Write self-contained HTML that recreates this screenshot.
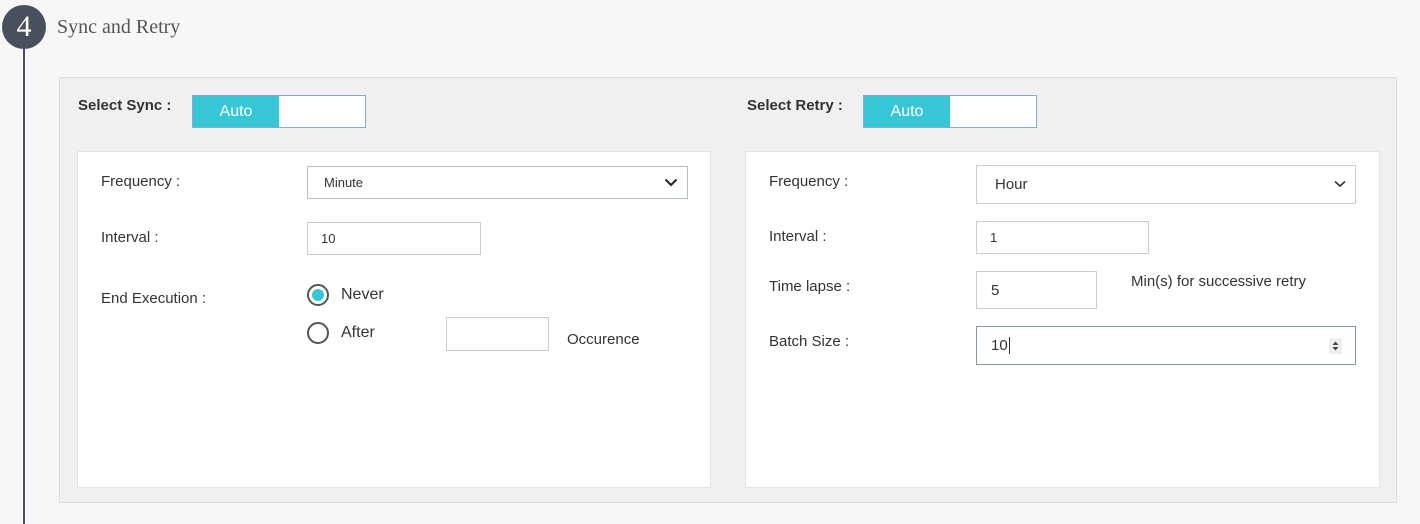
<!DOCTYPE html><html><head><style>
body{margin:0;width:1420px;height:524px;background:#f7f7f7;position:relative;overflow:hidden;font-family:"Liberation Sans",sans-serif;color:#333}
.a{position:absolute}
.lbl{font-size:15px;color:#333}
.in{position:absolute;background:#fff;border:1px solid #c5cdd9;box-sizing:border-box;font-size:14px;color:#333;display:flex;align-items:center}
.tg{position:absolute;height:33px;width:174px;border:1px solid #8aa9cc;box-sizing:border-box;background:#fff}
.tg div{width:86px;height:100%;background:#37c6d6;color:#fff;font-size:16px;display:flex;align-items:center;justify-content:center}
.chev{position:absolute;right:9px;top:50%;margin-top:-5px}
</style></head><body>
<div class="a" style="left:23px;top:40px;width:2px;height:484px;background:#4a4f5e"></div>
<div class="a" style="left:2px;top:5px;width:44px;height:44px;border-radius:50%;background:#4a4f5e;color:#fff;font-family:'Liberation Serif',serif;font-size:30px;text-align:center;line-height:44px">4</div>
<div class="a" style="left:57px;top:16px;font-family:'Liberation Serif',serif;font-size:20px;color:#555">Sync and Retry</div>
<div class="a" style="left:59px;top:77px;width:1338px;height:426px;background:#f0f0f0;border:1px solid #dcdcdc;box-sizing:border-box"></div>
<div class="a" style="left:78px;top:97px;font-size:15px;font-weight:bold;color:#333">Select Sync :</div>
<div class="tg" style="left:192px;top:95px"><div>Auto</div></div>
<div class="a" style="left:747px;top:97px;font-size:15px;font-weight:bold;color:#333">Select Retry :</div>
<div class="tg" style="left:863px;top:95px"><div>Auto</div></div>
<div class="a" style="left:77px;top:151px;width:634px;height:337px;background:#fff;border:1px solid #e4e4e4;box-sizing:border-box"></div>
<div class="a" style="left:745px;top:151px;width:635px;height:337px;background:#fff;border:1px solid #e4e4e4;box-sizing:border-box"></div>

<div class="a lbl" style="left:101px;top:173px">Frequency :</div>
<div class="in" style="left:307px;top:166px;width:381px;height:33px;padding-left:16px;font-size:13px;border-color:#b5bfcc">Minute<svg class="chev" width="14" height="9" viewBox="0 0 14 9"><path d="M1.5 1.5L7 7l5.5-5.5" fill="none" stroke="#222" stroke-width="2"/></svg></div>
<div class="a lbl" style="left:101px;top:229px">Interval :</div>
<div class="in" style="left:307px;top:222px;width:174px;height:33px;padding-left:13px;font-size:13px">10</div>
<div class="a lbl" style="left:101px;top:290px">End Execution :</div>
<div class="a" style="left:307px;top:284px;width:22px;height:22px;border:2px solid #555;border-radius:50%;box-sizing:border-box"><div style="margin:3px;width:12px;height:12px;border-radius:50%;background:#37c6d6"></div></div>
<div class="a" style="left:341px;top:286px;font-size:16px">Never</div>
<div class="a" style="left:307px;top:322px;width:22px;height:22px;border:2px solid #555;border-radius:50%;box-sizing:border-box"></div>
<div class="a" style="left:341px;top:324px;font-size:16px">After</div>
<div class="in" style="left:446px;top:317px;width:103px;height:34px"></div>
<div class="a" style="left:567px;top:331px;font-size:15px">Occurence</div>

<div class="a lbl" style="left:769px;top:173px">Frequency :</div>
<div class="in" style="left:976px;top:165px;width:380px;height:39px;padding-left:18px;font-size:15px">Hour<svg class="chev" width="12" height="8" viewBox="0 0 12 8"><path d="M1 1.5L6 6l5-4.5" fill="none" stroke="#333" stroke-width="1.6"/></svg></div>
<div class="a lbl" style="left:769px;top:228px">Interval :</div>
<div class="in" style="left:976px;top:221px;width:173px;height:33px;padding-left:13px;font-size:13px">1</div>
<div class="a lbl" style="left:769px;top:278px">Time lapse :</div>
<div class="in" style="left:976px;top:271px;width:121px;height:38px;padding-left:14px;font-size:15px">5</div>
<div class="a" style="left:1131px;top:273px;font-size:15px">Min(s) for successive retry</div>
<div class="a lbl" style="left:769px;top:333px">Batch Size :</div>
<div class="in" style="left:976px;top:326px;width:380px;height:39px;padding-left:14px;font-size:15px;border-color:#8296b0">10<span style="display:inline-block;width:1px;height:17px;background:#333;margin-left:1px"></span>
<svg class="a" style="right:13px;top:11px" width="13" height="16" viewBox="0 0 13 16"><rect width="13" height="16" fill="#eee"/><path d="M3.5 7L6.5 3.5 9.5 7zM3.5 9l3 3.5 3-3.5z" fill="#444"/></svg></div>
</body></html>
